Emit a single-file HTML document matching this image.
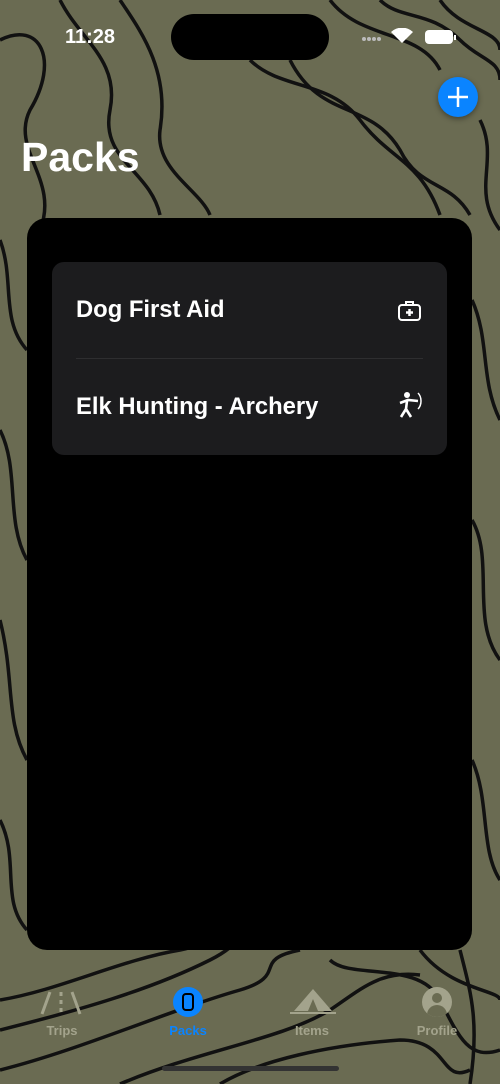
<!DOCTYPE html>
<html><head><meta charset="utf-8"><style>
*{margin:0;padding:0;box-sizing:border-box}
body{width:500px;height:1084px;overflow:hidden;background:#6a6b52;font-family:"Liberation Sans",sans-serif;position:relative}
svg.bg{position:absolute;left:0;top:0}
.time{position:absolute;left:65px;top:26px;color:#fff;font-weight:bold;font-size:20px}
.island{position:absolute;left:171px;top:14px;width:158px;height:46px;background:#000;border-radius:23px}
.plus{position:absolute;left:438px;top:77px;width:40px;height:40px;border-radius:50%;background:#0a84ff;box-shadow:0 2px 6px rgba(0,0,0,.4)}
h1{position:absolute;left:21px;top:134px;color:#fff;font-size:41px;font-weight:bold}
.card{position:absolute;left:27px;top:218px;width:445px;height:732px;background:#000;border-radius:20px}
.list{position:absolute;left:52px;top:262px;width:395px;height:193px;background:#1c1c1e;border-radius:12px}
.row{position:absolute;left:24px;color:#fff;font-size:23.8px;font-weight:bold}
.div{position:absolute;left:24px;right:24px;top:96px;height:1px;background:#2e2e30}
.tab{position:absolute;top:1023px;font-size:13px;font-weight:bold;color:#a3a38c;width:80px;text-align:center}
.home{position:absolute;left:162px;top:1066px;width:177px;height:5px;border-radius:3px;background:#333}
</style></head><body>
<svg class="bg" width="500" height="1084" fill="none" stroke="#111" stroke-width="3.5">
<path d="M0 40 C40 20 60 60 30 110 C10 150 60 180 40 230"/>
<path d="M60 0 C80 40 120 60 110 110 C100 160 150 170 160 215"/>
<path d="M120 0 C140 30 170 70 160 130 C155 170 200 190 210 215"/>
<path d="M250 60 C280 90 330 80 360 120 C390 160 420 160 440 215"/>
<path d="M290 60 C320 120 370 100 400 150 C420 190 450 180 470 215"/>
<path d="M330 0 C360 40 420 30 440 70"/>
<path d="M380 0 C400 20 430 10 460 40 C480 60 500 60 500 80"/>
<path d="M440 0 C460 30 500 30 500 50"/>
<path d="M480 120 C500 160 470 190 500 230"/>
<path d="M0 240 C15 280 0 320 27 350"/>
<path d="M0 430 C20 470 5 520 27 560"/>
<path d="M0 620 C15 680 5 720 27 760"/>
<path d="M0 820 C20 860 0 900 27 930"/>
<path d="M472 300 C490 340 480 380 500 420"/>
<path d="M472 520 C495 560 470 620 500 660"/>
<path d="M472 760 C490 800 480 850 500 880"/>
<path d="M0 1000 C60 990 120 960 180 950 C230 940 200 920 210 870"/>
<path d="M0 1030 C80 1010 150 990 210 960 C240 945 250 930 240 900"/>
<path d="M0 1070 C80 1050 170 1010 240 990 C290 975 250 960 300 950"/>
<path d="M120 1084 C200 1050 280 1040 330 1010 C360 990 380 970 420 975"/>
<path d="M220 1084 C260 1060 330 1045 400 1040 C450 1040 440 1084 470 1070"/>
<path d="M330 960 C350 980 420 960 440 1000 C460 1040 470 1060 500 1050"/>
<path d="M420 950 C450 990 500 990 500 1000"/>
<path d="M460 950 C470 990 480 1020 470 1084"/>
</svg>
<div class="time">11:28</div>
<div class="island"></div>
<svg style="position:absolute;left:360px;top:28px" width="100" height="18">
<g fill="#bbb"><circle cx="4" cy="11" r="2"/><circle cx="9" cy="11" r="2"/><circle cx="14" cy="11" r="2"/><circle cx="19" cy="11" r="2"/></g>
<path d="M42 15 l-11-11 a16 16 0 0 1 22 0z" fill="#fff"/>
<rect x="65" y="2" width="28" height="14" rx="4" fill="#fff"/><rect x="94" y="7" width="2" height="5" fill="#fff"/>
</svg>
<div class="plus"><svg width="40" height="40" stroke="#fff" stroke-width="2.5"><path d="M20 10v20M10 20h20"/></svg></div>
<h1>Packs</h1>
<div class="card"></div>
<div class="list">
<div class="row" style="top:34px">Dog First Aid</div>
<div class="div"></div>
<div class="row" style="top:131px">Elk Hunting - Archery</div>
<svg style="position:absolute;left:345px;top:37px" width="26" height="24" fill="none" stroke="#fff" stroke-width="2"><rect x="2" y="6" width="21" height="15" rx="3"/><path d="M9 6V3h7v3"/><path d="M12.5 10v7M9 13.5h7" stroke-width="2.5"/></svg>
<svg style="position:absolute;left:346px;top:128px" width="26" height="30" fill="#fff" stroke="#fff"><circle cx="9" cy="5" r="3" stroke="none"/><path d="M2 13l8-3 10 1M9 11l-1 8-5 8M8 19l5 8" stroke-width="2.6" fill="none"/><path d="M20 3c4 4 4 12 0 16" fill="none" stroke-width="1.5"/></svg>
</div>
<svg style="position:absolute;left:40px;top:990px" width="42" height="26" stroke="#a3a38c" stroke-width="3" fill="none"><path d="M10 2L2 24M32 2l8 22"/><path d="M21 2v22" stroke-dasharray="4 4"/></svg>
<div style="position:absolute;left:173px;top:987px;width:30px;height:30px;border-radius:50%;background:#0a84ff"><div style="position:absolute;left:9px;top:6px;width:12px;height:18px;border:2px solid #000;border-radius:4px"></div></div>
<svg style="position:absolute;left:290px;top:987px" width="46" height="30" fill="#a3a38c"><path d="M23 2L4 24h38z"/><path d="M23 12l-5 12h10z" fill="#6a6b52"/><path d="M0 26h46" stroke="#a3a38c" stroke-width="2"/></svg>
<div style="position:absolute;left:422px;top:987px;width:30px;height:30px;border-radius:50%;background:#a3a38c;overflow:hidden"><div style="position:absolute;left:10px;top:6px;width:10px;height:10px;border-radius:50%;background:#6a6b52"></div><div style="position:absolute;left:5px;top:18px;width:20px;height:14px;border-radius:10px 10px 0 0;background:#6a6b52"></div></div>
<div class="tab" style="left:22px">Trips</div>
<div class="tab" style="left:148px;color:#0a84ff">Packs</div>
<div class="tab" style="left:272px">Items</div>
<div class="tab" style="left:397px">Profile</div>
<div class="home"></div>
</body></html>
